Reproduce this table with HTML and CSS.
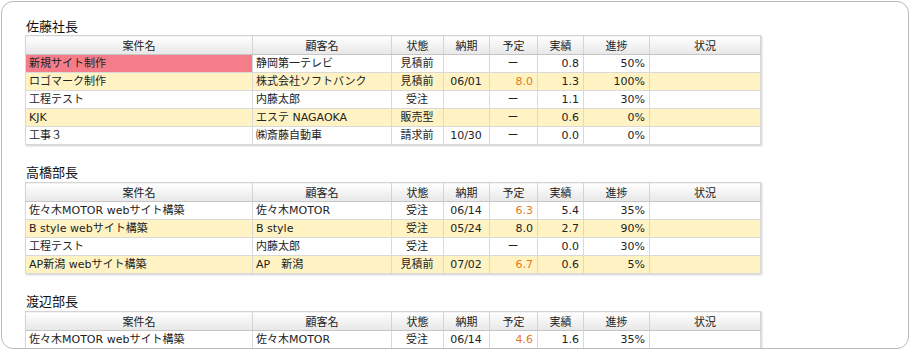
FILE: index.html
```html
<!DOCTYPE html>
<html lang="ja">
<head>
<meta charset="utf-8">
<link rel="stylesheet" href="styles.css">
</head>
<body>
<div class="frame">
  <section class="group">
    <h2 class="title">佐藤社長</h2>
    <table class="grid">
      <colgroup><col class="c1"><col class="c2"><col class="c3"><col class="c4"><col class="c5"><col class="c6"><col class="c7"><col class="c8"></colgroup>
      <thead><tr><th>案件名</th><th>顧客名</th><th>状態</th><th>納期</th><th>予定</th><th>実績</th><th>進捗</th><th>状況</th></tr></thead>
      <tbody>
        <tr class="alert"><td class="pink">新規サイト制作</td><td>静岡第一テレビ</td><td class="ctr">見積前</td><td class="ctr"></td><td class="ctr">ー</td><td class="num">0.8</td><td class="num">50%</td><td></td></tr>
        <tr class="alt"><td>ロゴマーク制作</td><td>株式会社ソフトバンク</td><td class="ctr">見積前</td><td class="ctr">06/01</td><td class="num orange">8.0</td><td class="num">1.3</td><td class="num">100%</td><td></td></tr>
        <tr><td>工程テスト</td><td>内藤太郎</td><td class="ctr">受注</td><td class="ctr"></td><td class="ctr">ー</td><td class="num">1.1</td><td class="num">30%</td><td></td></tr>
        <tr class="alt"><td>KJK</td><td>エステ NAGAOKA</td><td class="ctr">販売型</td><td class="ctr"></td><td class="ctr">ー</td><td class="num">0.6</td><td class="num">0%</td><td></td></tr>
        <tr><td>工事３</td><td>㈱斎藤自動車</td><td class="ctr">請求前</td><td class="ctr">10/30</td><td class="ctr">ー</td><td class="num">0.0</td><td class="num">0%</td><td></td></tr>
      </tbody>
    </table>
  </section>
  <section class="group">
    <h2 class="title">高橋部長</h2>
    <table class="grid">
      <colgroup><col class="c1"><col class="c2"><col class="c3"><col class="c4"><col class="c5"><col class="c6"><col class="c7"><col class="c8"></colgroup>
      <thead><tr><th>案件名</th><th>顧客名</th><th>状態</th><th>納期</th><th>予定</th><th>実績</th><th>進捗</th><th>状況</th></tr></thead>
      <tbody>
        <tr><td>佐々木MOTOR webサイト構築</td><td>佐々木MOTOR</td><td class="ctr">受注</td><td class="ctr">06/14</td><td class="num orange">6.3</td><td class="num">5.4</td><td class="num">35%</td><td></td></tr>
        <tr class="alt"><td>B style webサイト構築</td><td>B style</td><td class="ctr">受注</td><td class="ctr">05/24</td><td class="num">8.0</td><td class="num">2.7</td><td class="num">90%</td><td></td></tr>
        <tr><td>工程テスト</td><td>内藤太郎</td><td class="ctr">受注</td><td class="ctr"></td><td class="ctr">ー</td><td class="num">0.0</td><td class="num">30%</td><td></td></tr>
        <tr class="alt"><td>AP新潟 webサイト構築</td><td>AP　新潟</td><td class="ctr">見積前</td><td class="ctr">07/02</td><td class="num orange">6.7</td><td class="num">0.6</td><td class="num">5%</td><td></td></tr>
      </tbody>
    </table>
  </section>
  <section class="group">
    <h2 class="title">渡辺部長</h2>
    <table class="grid">
      <colgroup><col class="c1"><col class="c2"><col class="c3"><col class="c4"><col class="c5"><col class="c6"><col class="c7"><col class="c8"></colgroup>
      <thead><tr><th>案件名</th><th>顧客名</th><th>状態</th><th>納期</th><th>予定</th><th>実績</th><th>進捗</th><th>状況</th></tr></thead>
      <tbody>
        <tr><td>佐々木MOTOR webサイト構築</td><td>佐々木MOTOR</td><td class="ctr">受注</td><td class="ctr">06/14</td><td class="num orange">4.6</td><td class="num">1.6</td><td class="num">35%</td><td></td></tr>
        <tr class="alt"><td>&nbsp;</td><td></td><td></td><td></td><td></td><td></td><td></td><td></td></tr>
      </tbody>
    </table>
  </section>
</div>
</body>
</html>
```

FILE: styles.css
```css
html, body {
  margin: 0;
  padding: 0;
  background: #ffffff;
}

body {
  font-family: "DejaVu Sans", "Noto Sans CJK JP", sans-serif;
  color: #222;
  width: 910px;
  height: 350px;
  overflow: hidden;
}

.frame {
  box-sizing: border-box;
  margin: 1px 0 0 1px;
  width: 908px;
  height: 348px;
  border: 1px solid #b8b8b8;
  border-radius: 12px;
  padding: 0 0 0 23px;
  overflow: hidden;
  display: flex;
  flex-direction: column;
}

.group {
  display: flex;
  flex-direction: column;
}

.title {
  margin: 15px 0 0 1px;
  height: 18px;
  line-height: 18px;
  font-family: "Noto Sans CJK JP", sans-serif;
  font-weight: normal;
  font-size: 13px;
  color: #111;
}

.group + .group .title {
  margin-top: 18px;
  height: 19px;
}

.grid {
  border-collapse: collapse;
  table-layout: fixed;
  width: 736px;
  font-size: 11px;
  box-shadow: 1px 1px 2px rgba(0, 0, 0, 0.2);
}

.c1 { width: 227px; }
.c2 { width: 139px; }
.c3 { width: 52px; }
.c4 { width: 46px; }
.c5 { width: 48px; }
.c6 { width: 46px; }
.c7 { width: 66px; }
.c8 { width: 111px; }

.grid th {
  height: 18px;
  padding: 0;
  font-weight: normal;
  font-family: "Noto Sans CJK JP", sans-serif;
  font-size: 11px;
  line-height: 17px;
  color: #222;
  text-align: center;
  background: linear-gradient(#ffffff, #e7e7e7);
  border: 1px solid #d4d4d4;
  border-bottom-color: #c6c6c6;
}

.grid td {
  height: 17px;
  padding: 0 4px 0 3px;
  line-height: 17px;
  border: 1px solid #d9d9d9;
  white-space: nowrap;
  overflow: hidden;
  background: #ffffff;
}

.grid tr.alt td {
  background: #fff3c4;
}

.grid td.pink {
  background: #f47d89;
}

.ctr { text-align: center; }
.num { text-align: right; }
.orange { color: #e8781e; }
```
